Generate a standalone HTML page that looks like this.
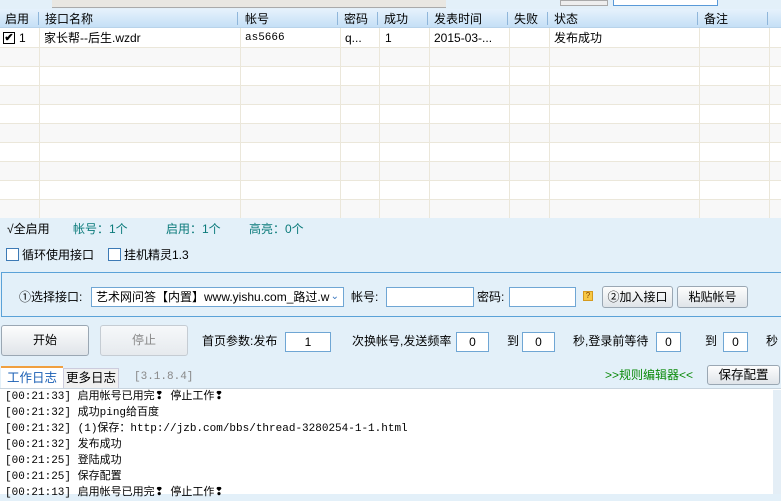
<!DOCTYPE html>
<html><head><meta charset="utf-8"><style>
*{margin:0;padding:0;box-sizing:border-box}
body{width:781px;height:494px;overflow:hidden;background:#e3f0f9;font-family:"Liberation Sans","Noto Sans CJK SC","WenQuanYi Zen Hei",sans-serif;font-size:12px;color:#000;position:relative}
.a{position:absolute;white-space:nowrap;line-height:16px}
.hdr{background:linear-gradient(#e6f2fc,#c5e0f6);}
.inp{position:absolute;background:#fff;border:1px solid #6fa6d4;text-align:center;line-height:18px}
.btn{position:absolute;border:1px solid #9aa7b3;border-radius:3px;background:linear-gradient(#fdfdfd,#dfe4e9);text-align:center}
.cb{position:absolute;width:13px;height:13px;border:1px solid #3d7ab5;background:#fff}
.log div{height:16px;line-height:16px;font-family:"Liberation Mono","Noto Sans CJK SC",monospace;font-size:11px}
</style></head><body>
<div class="a" style="left:52px;top:0;width:394px;height:8px;background:#e9e7e2;border-bottom:1px solid #aaa"></div>
<div class="a" style="left:560px;top:0;width:48px;height:6px;background:#eee;border:1px solid #aaa"></div>
<div class="a" style="left:613px;top:0;width:105px;height:6px;background:#fff;border:1px solid #5a9ad8;border-top:none"></div>
<div class="a" style="left:0;top:9px;width:781px;height:209px;background:#fff"></div>
<div class="a hdr" style="left:0;top:9px;width:781px;height:19px;border-bottom:1px solid #b8d3ea"></div>
<div class="a" style="left:0;top:9px;width:781px;height:209px">
<svg width="781" height="209" style="position:absolute;left:0;top:0">
<g fill="#f8f8f8"><rect x="0" y="38" width="781" height="19"/><rect x="0" y="76" width="781" height="19"/><rect x="0" y="114" width="781" height="19"/><rect x="0" y="152" width="781" height="19"/><rect x="0" y="190" width="781" height="19"/></g>
<g stroke="#ebe7da" stroke-width="1">
<line x1="0" y1="38.5" x2="781" y2="38.5"/><line x1="0" y1="57.5" x2="781" y2="57.5"/><line x1="0" y1="76.5" x2="781" y2="76.5"/><line x1="0" y1="95.5" x2="781" y2="95.5"/><line x1="0" y1="114.5" x2="781" y2="114.5"/><line x1="0" y1="133.5" x2="781" y2="133.5"/><line x1="0" y1="152.5" x2="781" y2="152.5"/><line x1="0" y1="171.5" x2="781" y2="171.5"/><line x1="0" y1="190.5" x2="781" y2="190.5"/>
<line x1="39.5" y1="19" x2="39.5" y2="209"/><line x1="240.5" y1="19" x2="240.5" y2="209"/><line x1="340.5" y1="19" x2="340.5" y2="209"/><line x1="379.5" y1="19" x2="379.5" y2="209"/><line x1="429.5" y1="19" x2="429.5" y2="209"/><line x1="509.5" y1="19" x2="509.5" y2="209"/><line x1="549.5" y1="19" x2="549.5" y2="209"/><line x1="699.5" y1="19" x2="699.5" y2="209"/><line x1="769.5" y1="19" x2="769.5" y2="209"/>
</g>
<g stroke="#8fb6da"><line x1="38.5" y1="3" x2="38.5" y2="16"/><line x1="237.5" y1="3" x2="237.5" y2="16"/><line x1="337.5" y1="3" x2="337.5" y2="16"/><line x1="377.5" y1="3" x2="377.5" y2="16"/><line x1="427.5" y1="3" x2="427.5" y2="16"/><line x1="507.5" y1="3" x2="507.5" y2="16"/><line x1="547.5" y1="3" x2="547.5" y2="16"/><line x1="697.5" y1="3" x2="697.5" y2="16"/><line x1="767.5" y1="3" x2="767.5" y2="16"/></g>
</svg></div>
<div class="a" style="left:5px;top:11px">启用</div>
<div class="a" style="left:45px;top:11px">接口名称</div>
<div class="a" style="left:245px;top:11px">帐号</div>
<div class="a" style="left:344px;top:11px">密码</div>
<div class="a" style="left:384px;top:11px">成功</div>
<div class="a" style="left:434px;top:11px">发表时间</div>
<div class="a" style="left:514px;top:11px">失败</div>
<div class="a" style="left:554px;top:11px">状态</div>
<div class="a" style="left:704px;top:11px">备注</div>
<div class="a" style="left:3px;top:32px;width:12px;height:12px;border:1px solid #000;background:#fff;font-size:11px;line-height:10px;text-align:center;font-weight:bold">✔</div>
<div class="a" style="left:19px;top:30px">1</div>
<div class="a" style="left:44px;top:30px">家长帮--后生.wzdr</div>
<div class="a" style="left:245px;top:30px;font-family:'Liberation Mono',monospace;font-size:11px">as5666</div>
<div class="a" style="left:345px;top:30px">q...</div>
<div class="a" style="left:385px;top:30px">1</div>
<div class="a" style="left:434px;top:30px">2015-03-...</div>
<div class="a" style="left:554px;top:30px">发布成功</div>
<div class="a" style="left:7px;top:221px">√全启用</div>
<div class="a" style="left:73px;top:221px;color:#0a7a7a">帐号：1个</div>
<div class="a" style="left:166px;top:221px;color:#0a7a7a">启用：1个</div>
<div class="a" style="left:249px;top:221px;color:#0a7a7a">高亮：0个</div>
<div class="cb" style="left:6px;top:248px"></div><div class="a" style="left:22px;top:247px">循环使用接口</div>
<div class="cb" style="left:108px;top:248px"></div><div class="a" style="left:124px;top:247px">挂机精灵1.3</div>
<div class="a" style="left:1px;top:272px;width:790px;height:45px;border:1px solid #5aa2d8;background:#e3f0f9"></div>
<div class="a" style="left:19px;top:289px">①选择接口:</div>
<div class="a" style="left:91px;top:287px;width:253px;height:20px;background:#fff;border:1px solid #6fa6d4;padding-left:4px;line-height:18px">艺术网问答【内置】www.yishu.com_路过.w<span style="position:absolute;right:4px;top:0;color:#3a78c0;font-size:10px">⌄</span></div>
<div class="a" style="left:351px;top:289px">帐号:</div>
<div class="inp" style="left:386px;top:287px;width:88px;height:20px"></div>
<div class="a" style="left:477px;top:289px">密码:</div>
<div class="inp" style="left:509px;top:287px;width:67px;height:20px"></div>
<div class="a" style="left:583px;top:291px;width:10px;height:10px;background:#f7c845;border:1px solid #d59a1e;font-size:8px;line-height:8px;text-align:center;color:#804000">?</div>
<div class="btn" style="left:602px;top:286px;width:71px;height:22px;line-height:20px">②加入接口</div>
<div class="btn" style="left:677px;top:286px;width:71px;height:22px;line-height:20px">粘贴帐号</div>
<div class="btn" style="left:1px;top:325px;width:88px;height:31px;line-height:29px">开始</div>
<div class="btn" style="left:100px;top:325px;width:88px;height:31px;line-height:29px;color:#888;border-color:#c5ccd3;background:linear-gradient(#f6f8fa,#e6eaee)">停止</div>
<div class="a" style="left:202px;top:333px">首页参数:发布</div>
<div class="inp" style="left:285px;top:332px;width:46px;height:20px">1</div>
<div class="a" style="left:352px;top:333px">次换帐号,发送频率</div>
<div class="inp" style="left:456px;top:332px;width:33px;height:20px">0</div>
<div class="a" style="left:507px;top:333px">到</div>
<div class="inp" style="left:522px;top:332px;width:33px;height:20px">0</div>
<div class="a" style="left:573px;top:333px">秒,登录前等待</div>
<div class="inp" style="left:656px;top:332px;width:25px;height:20px">0</div>
<div class="a" style="left:705px;top:333px">到</div>
<div class="inp" style="left:723px;top:332px;width:25px;height:20px">0</div>
<div class="a" style="left:766px;top:333px">秒</div>
<div class="a" style="left:1px;top:366px;width:62px;height:23px;background:#fff;border-top:2px solid #f0a040;color:#1a5fb4;padding:2px 0 0 6px;font-size:12.5px">工作日志</div>
<div class="a" style="left:63px;top:368px;width:56px;height:21px;background:#f0f0f0;border:1px solid #ccd;padding:1px 0 0 2px;font-size:12.5px">更多日志</div>
<div class="a" style="left:134px;top:369px;color:#888;font-family:'Liberation Mono',monospace;font-size:11px">[3.1.8.4]</div>
<div class="a" style="left:605px;top:367px;color:#0a8a0a">&gt;&gt;规则编辑器&lt;&lt;</div>
<div class="btn" style="left:707px;top:365px;width:73px;height:20px;line-height:18px;font-size:12.5px">保存配置</div>
<div class="a" style="left:0;top:388px;width:781px;height:106px;background:#fff;border-top:1px solid #c8d4de"></div>
<div class="a" style="left:773px;top:390px;width:8px;height:104px;background:#e4eef6"></div>
<div class="a log" style="left:5px;top:389px">
<div>[00:21:33] 启用帐号已用完❢ 停止工作❢</div>
<div>[00:21:32] 成功ping给百度</div>
<div>[00:21:32] (1)保存：http://jzb.com/bbs/thread-3280254-1-1.html</div>
<div>[00:21:32] 发布成功</div>
<div>[00:21:25] 登陆成功</div>
<div>[00:21:25] 保存配置</div>
<div>[00:21:13] 启用帐号已用完❢ 停止工作❢</div>
</div>
</body></html>
